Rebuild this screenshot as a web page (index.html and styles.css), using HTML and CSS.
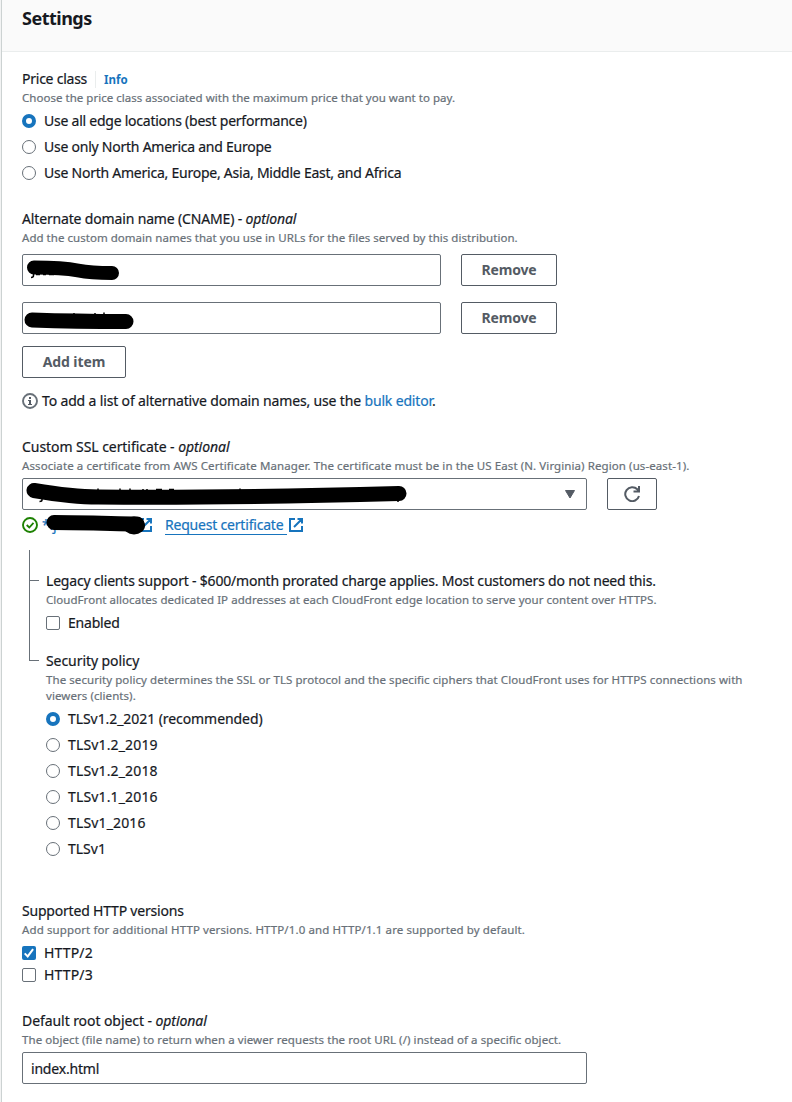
FILE: index.html
```html
<!DOCTYPE html>
<html lang="en">
<head>
<meta charset="utf-8">
<title>Settings</title>
<link rel="stylesheet" href="styles.css">
</head>
<body>
<main class="panel">
  <header class="panel-header"><h1>Settings</h1></header>
  <div class="panel-body">

    <section class="field price">
      <div class="label-row"><span class="label">Price class</span><a class="info">Info</a></div>
      <p class="hint">Choose the price class associated with the maximum price that you want to pay.</p>
      <div class="options">
        <label class="option"><span class="radio checked"></span><span>Use all edge locations (best performance)</span></label>
        <label class="option"><span class="radio"></span><span>Use only North America and Europe</span></label>
        <label class="option"><span class="radio"></span><span>Use North America, Europe, Asia, Middle East, and Africa</span></label>
      </div>
    </section>

    <section class="field cname">
      <div class="label">Alternate domain name (CNAME) - <i>optional</i></div>
      <p class="hint">Add the custom domain names that you use in URLs for the files served by this distribution.</p>
      <div class="domain-list">
        <div class="control-row">
          <div class="input domain">
            <svg class="mark" width="120" height="32" viewBox="0 0 120 32"><path class="ink-text" d="M10.500 15v5.500q0 2-2.500 2M13 19.500h4M20 19.500h3M26 19.500h5"/><path class="stroke-14" d="M11 12.500C25 12.500 42 13 55 15.500S80 18 89 18"/></svg>
          </div>
          <button class="btn remove">Remove</button>
        </div>
        <div class="control-row">
          <div class="input domain">
            <svg class="mark" width="120" height="32" viewBox="0 0 120 32"><path class="ink-text" d="M51 12v-2M72 12v-2M81 12v-2.500"/><path class="stroke-15" d="M9 17C38 18 78 18.500 103 18.500"/></svg>
          </div>
          <button class="btn remove">Remove</button>
        </div>
      </div>
      <button class="btn add">Add item</button>
      <div class="note">
        <svg class="icon" width="16" height="16" viewBox="0 0 16 16"><circle cx="8" cy="8" r="7" fill="none" stroke="#687078" stroke-width="1.900"/><path d="M7 4h2v2H7zM6 7h3v4h1v1H6v-1h1V8H6z" fill="#545b64"/></svg>
        <span>To add a list of alternative domain names, use the <a>bulk editor</a>.</span>
      </div>
    </section>

    <section class="field ssl">
      <div class="label">Custom SSL certificate - <i>optional</i></div>
      <p class="hint">Associate a certificate from AWS Certificate Manager. The certificate must be in the US East (N. Virginia) Region (us-east-1).</p>
      <div class="control-row select-row">
        <div class="input select">
          <svg class="mark" width="400" height="32" viewBox="0 0 400 32"><path class="ink-text" d="M19 18v3q0 1.500-2.500 1.500M75 11v-1.500M97 11v-1.500M107 11v-1.500M120 11v-1M124 11v-1M133 10.500h6M146 10.500h5M217 11v-1.500M375 20v3"/><path class="stroke-15" d="M11 11.500C38 16 55 18 75 18C160 19 280 17 376 14.500"/></svg>
          <svg class="arrow" width="10" height="9" viewBox="0 0 10 9"><path d="M.5.500h9l-4.500 7.500z" fill="#545b64" stroke="#545b64" stroke-linejoin="round"/></svg>
        </div>
        <button class="btn refresh"><svg width="16" height="16" viewBox="0 0 16 16"><path d="M15 10A7 7 0 1 1 13.300 3.300L15 5M15 0v5.500H9.500" fill="none" stroke="#545b64" stroke-width="2"/></svg></button>
      </div>
      <div class="cert-status">
        <svg class="icon" width="16" height="16" viewBox="0 0 16 16"><circle cx="8" cy="8" r="7" fill="none" stroke="#1d8102" stroke-width="1.900"/><path d="M4.700 8l2.600 2.500 4.200-4.700" fill="none" stroke="#1d8102" stroke-width="1.800"/></svg>
        <a class="cert-link"><span>*.j</span><svg class="ext" width="14" height="14" viewBox="0 0 14 14"><path d="M6 1H1v12h12V8M8.500 1H13v4.500M13 1L5 9" fill="none" stroke="#1774bd" stroke-width="2"/></svg>
          <svg class="cert-mark" width="110" height="24" viewBox="0 0 110 24"><path class="stroke-15" d="M11 9.500C40 9.500 67 10.500 94 11"/><ellipse cx="91" cy="12.500" rx="11" ry="9"/></svg>
        </a>
        <a class="request"><span>Request certificate</span><svg class="ext" width="14" height="14" viewBox="0 0 14 14"><path d="M6 1H1v12h12V8M8.500 1H13v4.500M13 1L5 9" fill="none" stroke="#1774bd" stroke-width="2"/></svg></a>
      </div>

      <div class="tree">
        <div class="branch first">
          <div class="label">Legacy clients support - $600/month prorated charge applies. Most customers do not need this.</div>
          <p class="hint">CloudFront allocates dedicated IP addresses at each CloudFront edge location to serve your content over HTTPS.</p>
          <label class="option"><span class="checkbox"></span><span>Enabled</span></label>
        </div>
        <div class="branch last">
          <div class="label">Security policy</div>
          <p class="hint">The security policy determines the SSL or TLS protocol and the specific ciphers that CloudFront uses for HTTPS connections with<br>viewers (clients).</p>
          <div class="options">
            <label class="option recommended"><span class="radio checked"></span><span>TLSv1.2_2021 (recommended)</span></label>
            <label class="option"><span class="radio"></span><span>TLSv1.2_2019</span></label>
            <label class="option"><span class="radio"></span><span>TLSv1.2_2018</span></label>
            <label class="option"><span class="radio"></span><span>TLSv1.1_2016</span></label>
            <label class="option"><span class="radio"></span><span>TLSv1_2016</span></label>
            <label class="option short"><span class="radio"></span><span>TLSv1</span></label>
          </div>
        </div>
      </div>
    </section>

    <section class="field http">
      <div class="label">Supported HTTP versions</div>
      <p class="hint">Add support for additional HTTP versions. HTTP/1.0 and HTTP/1.1 are supported by default.</p>
      <label class="option"><span class="checkbox checked"><svg width="14" height="14" viewBox="0 0 14 14"><path d="M2.700 7.400l3 3 5.400-7.300" fill="none" stroke="#fff" stroke-width="2"/></svg></span><span>HTTP/2</span></label>
      <label class="option"><span class="checkbox"></span><span>HTTP/3</span></label>
    </section>

    <section class="field root">
      <div class="label">Default root object - <i>optional</i></div>
      <p class="hint">The object (file name) to return when a viewer requests the root URL (/) instead of a specific object.</p>
      <div class="input object">index.html</div>
    </section>
  </div>
</main>
</body>
</html>
```
FILE: styles.css
```css
* { box-sizing: border-box; }
body {
  margin: 0;
  background: #f2f3f3;
  color: #16191f;
  font: 14px/22px "Noto Sans", sans-serif;
  letter-spacing: -.2px;
  -webkit-text-stroke: .2px;
}
.panel {
  height: 1102px;
  margin-left: 1px;
  border-left: 1px solid #ccd2d2;
  background: #fff;
  overflow: hidden;
  white-space: nowrap;
}
.panel-header {
  height: 52px;
  padding: 7px 20px 0;
  background: #fafafa;
  border-bottom: 1px solid #eaeded;
}
h1 { margin: 0; font-size: 18px; line-height: 22px; font-weight: 700; letter-spacing: -.5px; -webkit-text-stroke: 0; }
.panel-body { padding: 16px 20px 0; display: flex; flex-direction: column; }
a { color: #1774bd; }
.label-row { display: flex; height: 22px; align-items: center; }
.info {
  margin-left: 8px;
  padding: 1px 0 0 8px;
  border-left: 1px solid #eaeded;
  font-size: 11.500px;
  line-height: 16px;
  font-weight: 700;
  letter-spacing: 0;
  -webkit-text-stroke: 0;
}
.hint { margin: 0 0 4px; font-size: 11.500px; line-height: 16px; color: #687078; }
.options { display: flex; flex-direction: column; gap: 4px; }
.option { display: flex; align-items: center; gap: 8px; height: 22px; }
.radio, .checkbox { flex: none; width: 14px; height: 14px; border: 1px solid #687078; background: #fff; }
.radio { border-radius: 50%; }
.radio.checked { border: 4px solid #1774bd; }
.checkbox { border-radius: 2px; }
.checkbox.checked { border: 0; background: #1774bd; }
.checkbox svg { display: block; }
.field + .field { margin-top: 24px; }
.domain-list { display: flex; flex-direction: column; gap: 16px; margin: 8px 0 12px; }
.control-row { display: flex; gap: 20px; }
.input {
  position: relative;
  height: 32px;
  padding: 5px 8px 3px;
  border: 1px solid #687078;
  border-radius: 2px;
  background: #fff;
}
.domain { width: 419px; }
.select, .object { width: 565px; }
.btn {
  display: flex;
  align-items: center;
  justify-content: center;
  height: 32px;
  padding: 0;
  border: 1px solid #545b64;
  border-radius: 2px;
  background: #fff;
  color: #545b64;
  font: 700 14px/20px "Noto Sans", sans-serif;
  -webkit-text-stroke: 0;
}
.remove { width: 96px; letter-spacing: -.2px; }
.add { width: 104px; letter-spacing: -.1px; }
.refresh { width: 50px; }
.note { display: flex; align-items: center; gap: 4px; height: 22px; margin-top: 12px; }
.icon { flex: none; }
.mark { position: absolute; left: 0; top: 0; }
.mark path, .cert-mark path { fill: none; stroke: #000; stroke-linecap: round; }
.mark .ink-text { stroke-width: 1.500; stroke-linecap: butt; }
.stroke-14 { stroke-width: 14px; }
.stroke-15 { stroke-width: 15px; }
.arrow { position: absolute; right: 11px; top: 11px; }
.cert-status { display: flex; align-items: center; height: 22px; margin-top: 4px; }
.cert-link { position: relative; display: flex; align-items: center; width: 110px; margin-left: 4px; }
.cert-link .ext { margin-left: auto; }
.cert-mark { position: absolute; left: 1px; top: -1px; }
.cert-mark ellipse { fill: #000; stroke: none; }
.request { display: flex; align-items: center; margin-left: 13px; gap: 2px; }
.request span { padding-right: 4px; line-height: 19px; border-bottom: 1px solid #1774bd; }
.tree { margin: 14px 0 0 7px; }
.branch { position: relative; padding-left: 16px; border-left: 1px solid #687078; }
.branch::before { content: ""; position: absolute; left: 0; width: 9px; height: 1px; background: #687078; }
.first { height: 100px; padding-top: 20px; }
.first::before { top: 30px; }
.last { border-left-color: transparent; }
.last::before { left: -1px; top: 10px; width: 10px; }
.last::after { content: ""; position: absolute; left: -1px; top: 0; width: 1px; height: 10px; background: #687078; }
.ssl + .http { margin-top: 40px; }

/* Tracking per block */
.price { letter-spacing: -.240px; }
.price .hint { letter-spacing: .025px; }
.cname { letter-spacing: -.155px; }
.cname .hint { letter-spacing: .035px; }
.ssl > .label { letter-spacing: -.060px; }
.ssl > .hint { letter-spacing: .090px; }
.first .hint { letter-spacing: .045px; }
.last .label, .last .recommended { letter-spacing: -.070px; }
.last .hint { letter-spacing: .070px; }
.last .option { letter-spacing: .150px; }
.last .option.recommended { letter-spacing: -.070px; }
.last .option.short { letter-spacing: 0; }
.http .hint { letter-spacing: .115px; }
.http .option { letter-spacing: .150px; }
.root .label { letter-spacing: -.070px; }
.root .hint { letter-spacing: .080px; }
```
